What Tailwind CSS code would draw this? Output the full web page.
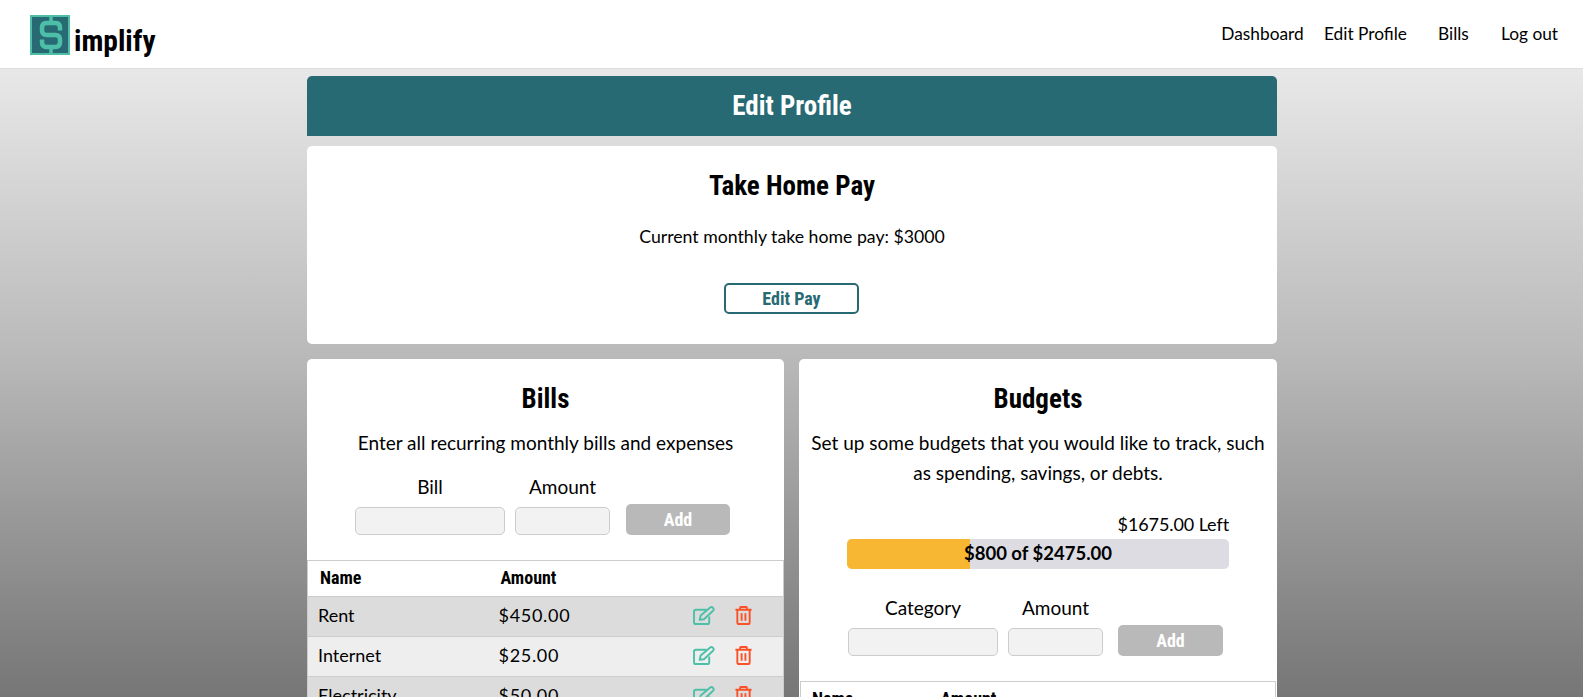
<!DOCTYPE html>
<html lang="en"><head><meta charset="utf-8"><title>Simplify</title>
<script src="https://cdn.jsdelivr.net/npm/@tailwindcss/browser@4"></script></head>
<body class="h-[697px] overflow-hidden bg-white font-['Lato','Open_Sans',sans-serif] text-black">
<nav class="h-[69px] flex items-center justify-between bg-white border-b border-[#dddddd] pl-[30px] pr-[25px]">
  <div class="flex items-end">
    <svg width="40" height="40" viewBox="0 0 40 40" class="mt-[1px]"><rect x="1" y="1" width="38" height="38" fill="#286a73" stroke="#4dbfa9" stroke-width="2"/><path d="M30 15.500V13Q30 8 25.500 8H16.500Q12 8 12 13V15Q12 20 16.500 20H25.500Q30 20 30 25V27Q30 32 25.500 32H16.500Q12 32 12 27V24.500" fill="none" stroke="#4dbfa9" stroke-width="4.500"/><path d="M21 1V8M21 32V39" stroke="#4dbfa9" stroke-width="3.500"/></svg>
    <span class="ml-[4px] mb-[-2px] text-[29.500px] leading-[32px] font-bold font-['Roboto',sans-serif] [font-stretch:75%]">implify</span>
  </div>
  <div class="flex items-center text-[17.300px]">
    <a class="w-[83px] text-center whitespace-nowrap">Dashboard</a>
    <a class="ml-[20px] w-[82px] text-center whitespace-nowrap">Edit Profile</a>
    <a class="ml-[32px] w-[30px] text-center">Bills</a>
    <a class="ml-[33px] w-[57px] text-center whitespace-nowrap">Log out</a>
  </div>
</nav>
<main class="h-[628px] overflow-hidden bg-gradient-to-b from-[#e8e8e8] via-[#bababa] via-45% to-[#767676] pt-[7px]">
  <div class="w-[970px] ml-[307px] flex flex-col gap-[10px]">
    <header class="h-[60px] bg-[#286a73] rounded-t-[5px] flex items-center justify-center text-white text-[27px] font-bold font-['Roboto',sans-serif] [font-stretch:75%]">Edit Profile</header>
    <section class="h-[198px] bg-white rounded-[5px] flex flex-col items-center">
      <h2 class="mt-[22px] text-[27px] leading-[36px] font-bold font-['Roboto',sans-serif] [font-stretch:75%]">Take Home Pay</h2>
      <p class="mt-[20px] text-[17.700px] leading-[26px]">Current monthly take home pay: $3000</p>
      <button class="mt-[33px] mr-[1px] w-[135px] h-[31px] border-2 border-[#286a73] rounded-[5px] text-[#286a73] text-[18px] font-bold font-['Roboto',sans-serif] [font-stretch:75%]">Edit Pay</button>
    </section>
    <div class="mt-[5px] grid grid-cols-[477px_478px] gap-[15px]">
      <section class="h-[400px] bg-white rounded-t-[5px] flex flex-col">
        <h2 class="mt-[22px] text-center text-[27px] leading-[36px] font-bold font-['Roboto',sans-serif] [font-stretch:75%]">Bills</h2>
        <p class="mt-[11px] text-center text-[19px] leading-[30px]">Enter all recurring monthly bills and expenses</p>
        <div class="mt-[15px] ml-[48px] flex items-end">
          <label class="w-[150px] text-center text-[19px] leading-[28px]">Bill<span class="block mt-[6px] h-[28px] bg-[#f2f2f2] border border-[#cccccc] rounded-[5px]"></span></label>
          <label class="ml-[10px] w-[95px] text-center text-[19px] leading-[28px]">Amount<span class="block mt-[6px] h-[28px] bg-[#f2f2f2] border border-[#cccccc] rounded-[5px]"></span></label>
          <button class="ml-[16px] w-[104px] h-[31px] bg-[#b9b9b9] rounded-[5px] text-white text-[18px] font-bold font-['Roboto',sans-serif] [font-stretch:75%]">Add</button>
        </div>
        <table class="mt-[25px] w-full border border-[#cccccc] border-collapse text-[18px] table-fixed">
          <thead class="font-['Roboto',sans-serif] [font-stretch:75%] font-bold text-[18px]"><tr class="h-[36px] border-b border-[#cccccc]"><th class="w-[181px] pl-[12px] pb-[2px] text-left">Name</th><th class="pl-[12px] pb-[2px] text-left">Amount</th><th class="w-[91px]"></th></tr></thead>
          <tbody>
            <tr class="h-[40px] bg-[#dcdcdc] border-b border-[#cccccc]"><td class="pl-[10px] pb-[2px]">Rent</td><td class="pl-[10px] pb-[2px] tracking-[0.7px]">$450.00</td><td class="pb-[2px]"><div class="flex gap-[20px]">
              <svg width="22" height="19" viewBox="0 0 23 20" fill="none" stroke="#4dbfa9" stroke-width="2" stroke-linejoin="round"><path d="M14 4H3Q1 4 1 6V17Q1 19 3 19H15Q17 19 17 17V11"/><path d="M7 14.500L8 10L18 1.500Q19.500 .5 21 2T21 5L11.500 14Z"/></svg>
              <svg width="17" height="19" viewBox="0 0 17 20" fill="none" stroke="#fb5127" stroke-width="2" stroke-linejoin="round"><path d="M0 4H17M5 4V1.500Q5 1 6 1H11Q12 1 12 1.500V4M2 4V17Q2 19 4 19H13Q15 19 15 17V4M6.500 7.500V15.500M10.500 7.500V15.500"/></svg></div></td></tr>
            <tr class="h-[40px] bg-[#eeeeee] border-b border-[#cccccc]"><td class="pl-[10px] pb-[2px]">Internet</td><td class="pl-[10px] pb-[2px] tracking-[0.7px]">$25.00</td><td class="pb-[2px]"><div class="flex gap-[20px]">
              <svg width="22" height="19" viewBox="0 0 23 20" fill="none" stroke="#4dbfa9" stroke-width="2" stroke-linejoin="round"><path d="M14 4H3Q1 4 1 6V17Q1 19 3 19H15Q17 19 17 17V11"/><path d="M7 14.500L8 10L18 1.500Q19.500 .5 21 2T21 5L11.500 14Z"/></svg>
              <svg width="17" height="19" viewBox="0 0 17 20" fill="none" stroke="#fb5127" stroke-width="2" stroke-linejoin="round"><path d="M0 4H17M5 4V1.500Q5 1 6 1H11Q12 1 12 1.500V4M2 4V17Q2 19 4 19H13Q15 19 15 17V4M6.500 7.500V15.500M10.500 7.500V15.500"/></svg></div></td></tr>
            <tr class="h-[40px] bg-[#dcdcdc]"><td class="pl-[10px] pb-[2px]">Electricity</td><td class="pl-[10px] pb-[2px] tracking-[0.7px]">$50.00</td><td class="pb-[2px]"><div class="flex gap-[20px]">
              <svg width="22" height="19" viewBox="0 0 23 20" fill="none" stroke="#4dbfa9" stroke-width="2" stroke-linejoin="round"><path d="M14 4H3Q1 4 1 6V17Q1 19 3 19H15Q17 19 17 17V11"/><path d="M7 14.500L8 10L18 1.500Q19.500 .5 21 2T21 5L11.500 14Z"/></svg>
              <svg width="17" height="19" viewBox="0 0 17 20" fill="none" stroke="#fb5127" stroke-width="2" stroke-linejoin="round"><path d="M0 4H17M5 4V1.500Q5 1 6 1H11Q12 1 12 1.500V4M2 4V17Q2 19 4 19H13Q15 19 15 17V4M6.500 7.500V15.500M10.500 7.500V15.500"/></svg></div></td></tr>
          </tbody>
        </table>
      </section>
      <section class="h-[400px] bg-white rounded-t-[5px] flex flex-col">
        <h2 class="mt-[22px] text-center text-[27px] leading-[36px] font-bold font-['Roboto',sans-serif] [font-stretch:75%]">Budgets</h2>
        <p class="mt-[11px] px-[10px] text-center text-[19px] leading-[30px]">Set up some budgets that you would like to track, such as spending, savings, or debts.</p>
        <p class="mt-[23px] pr-[48px] text-right text-[18px] leading-[26px] tracking-[-0.100px]">$1675.00 Left</p>
        <div class="relative mx-[48px] mt-[2px] h-[30px] rounded-[5px] bg-[#dcdce2] overflow-hidden">
          <div class="h-full w-[123px] bg-[#f8b733]"></div>
          <span class="absolute inset-0 flex items-center justify-center text-[18.500px] font-bold">$800 of $2475.00</span>
        </div>
        <div class="mt-[25px] ml-[49px] flex items-end">
          <label class="w-[150px] text-center text-[19px] leading-[28px]">Category<span class="block mt-[6px] h-[28px] bg-[#f2f2f2] border border-[#cccccc] rounded-[5px]"></span></label>
          <label class="ml-[10px] w-[95px] text-center text-[19px] leading-[28px]">Amount<span class="block mt-[6px] h-[28px] bg-[#f2f2f2] border border-[#cccccc] rounded-[5px]"></span></label>
          <button class="ml-[15px] w-[105px] h-[31px] bg-[#b9b9b9] rounded-[5px] text-white text-[18px] font-bold font-['Roboto',sans-serif] [font-stretch:75%]">Add</button>
        </div>
        <table class="mt-[25px] w-[476px] ml-[1px] border border-[#cccccc] border-collapse table-fixed">
          <thead class="font-['Roboto',sans-serif] [font-stretch:75%] font-bold text-[18px]"><tr class="h-[36px]"><th class="w-[129px] pl-[11px] pb-[2px] text-left">Name</th><th class="pl-[11px] pb-[2px] text-left">Amount</th></tr></thead>
        </table>
      </section>
    </div>
  </div>
</main>
</body></html>
